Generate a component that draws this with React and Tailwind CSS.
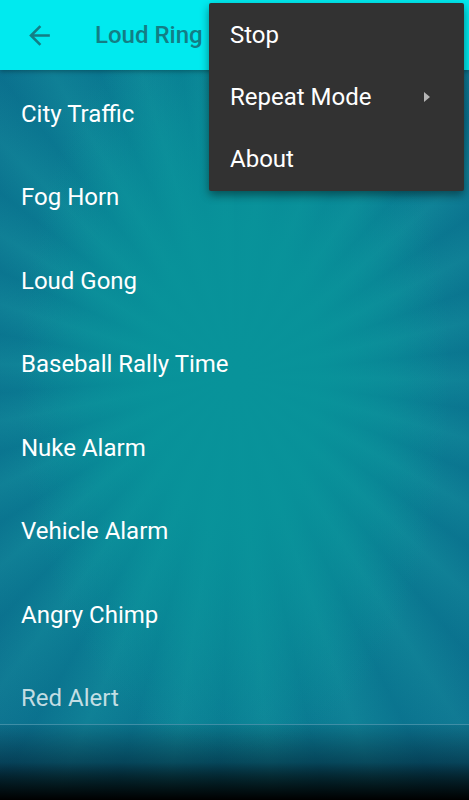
import React from "react";

const sounds = [
    "City Traffic",
    "Fog Horn",
    "Loud Gong",
    "Baseball Rally Time",
    "Nuke Alarm",
    "Vehicle Alarm",
    "Angry Chimp",
    "Red Alert",
];

function App() {
    return (
        <div className="relative w-[469px] h-[800px] overflow-hidden font-['Roboto',sans-serif] bg-[#0b7f93] bg-[image:radial-gradient(ellipse_at_50%_47%,#08939a_0%,rgba(8,147,154,0.9)_25%,rgba(8,147,154,0)_65%),repeating-conic-gradient(from_0deg_at_50%_47%,rgba(6,50,110,0.11)_0deg,rgba(255,255,255,0.02)_7deg,rgba(6,50,110,0.11)_14deg),radial-gradient(ellipse_at_50%_47%,#08909a_0%,#0a8898_45%,#0c7390_100%)]">
            {/* toolbar */}
            <div className="relative z-10 h-[70px] bg-[#00eaef] flex items-center shadow-[0_2px_4px_rgba(0,0,0,0.25)]">
                <div className="w-[74px] flex justify-center pl-1">
                    <svg viewBox="0 0 24 24" className="w-[31px] h-[31px] fill-[#137e85]">
                        <path d="M20 11H7.83l5.59-5.59L12 4l-8 8 8 8 1.41-1.41L7.83 13H20v-2z" />
                    </svg>
                </div>
                <div className="ml-[21px] text-[24px] font-medium text-[#137e85] whitespace-nowrap">Loud Ring</div>
            </div>

            {/* list */}
            <div className="relative h-[654px] pt-[2px] overflow-hidden">
                {sounds.map((s, i) => (
                    <div
                        key={s}
                        className={"h-[83.5px] flex items-center pl-[21px] text-[24px] " + (i === 7 ? "text-white/75" : "text-white")}
                    >
                        {s}
                    </div>
                ))}
            </div>

            {/* bottom area */}
            <div className="h-px bg-[#3f8ea6]"></div>
            <div className="h-[75px] bg-gradient-to-b from-[rgba(0,40,60,0.1)] via-[rgba(0,20,35,0.5)] to-black"></div>

            {/* overflow menu */}
            <div className="absolute z-20 left-[209px] top-[3px] w-[255px] bg-[#323232] rounded-[2px] shadow-[0_4px_10px_rgba(0,0,0,0.45)]">
                <div className="h-[62.5px] flex items-center px-[21px] pt-[2px] text-[24px] text-white">Stop</div>
                <div className="h-[62.5px] flex items-center justify-between pl-[21px] pr-[34px] text-[24px] text-white">
                    <span>Repeat Mode</span>
                    <span className="w-0 h-0 border-y-[5px] border-y-transparent border-l-[6px] border-l-[#b5b5b5]"></span>
                </div>
                <div className="h-[62.5px] flex items-center px-[21px] text-[24px] text-white">About</div>
            </div>
        </div>
    );
}

export default App;
